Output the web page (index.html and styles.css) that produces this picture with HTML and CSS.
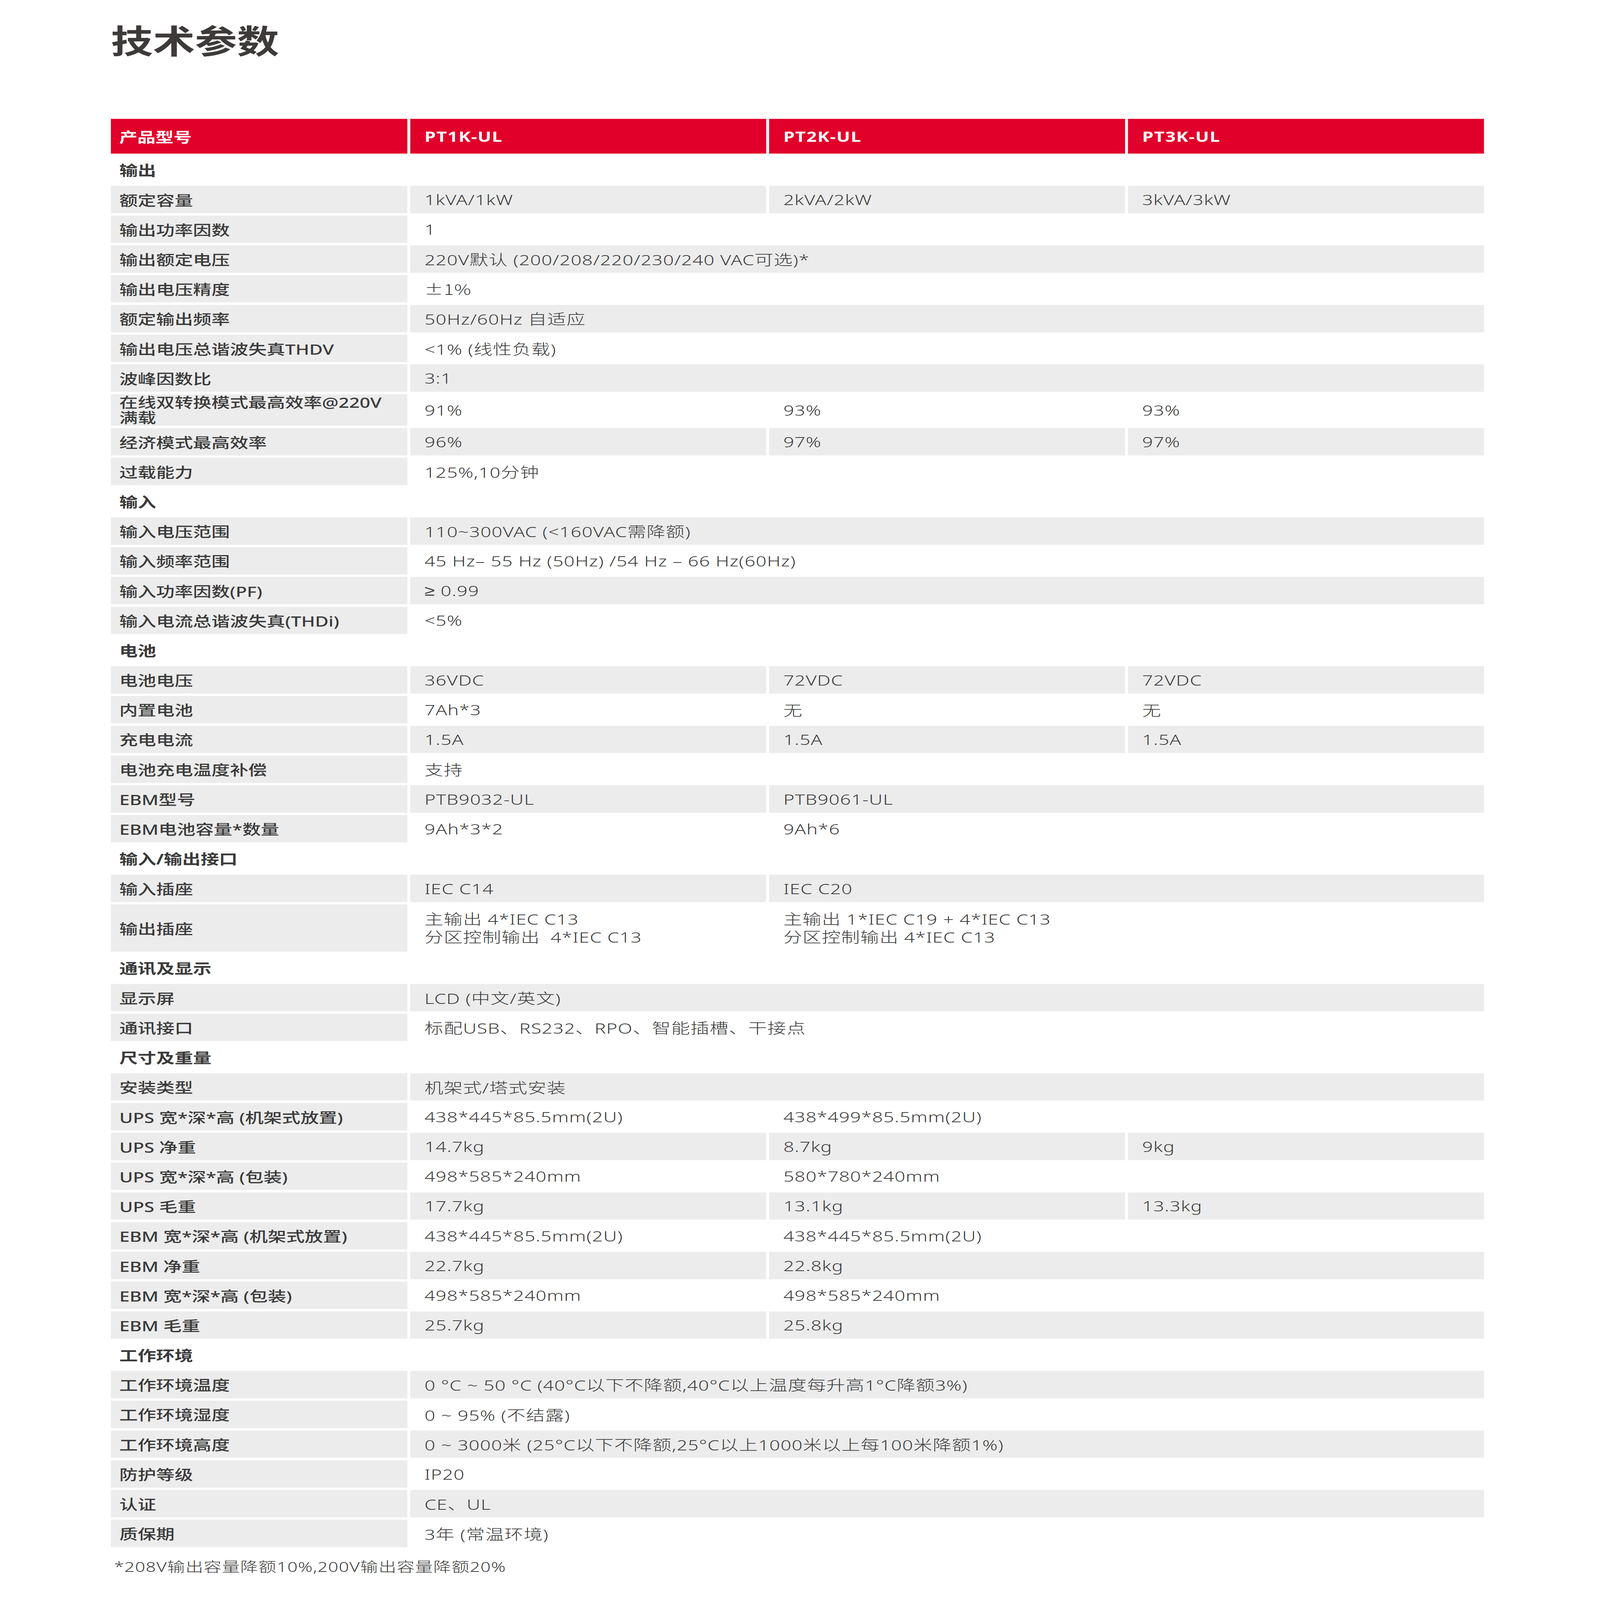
FILE: index.html
```html
<!DOCTYPE html>
<html lang="zh-CN">
<head>
<meta charset="utf-8">
<title>技术参数</title>
<link rel="stylesheet" href="styles.css">
</head>
<body>
<div class="frame">
<div class="page" id="page">
  <h1 class="title">技术参数</h1>

  <div class="spec">
    <div class="row head">
      <div class="cell lab">产品型号</div>
      <div class="cell">PT1K-UL</div>
      <div class="cell">PT2K-UL</div>
      <div class="cell">PT3K-UL</div>
    </div>

    <div class="row sec"><div class="cell lab">输出</div></div>
    <div class="row g"><div class="cell lab">额定容量</div><div class="cell">1kVA/1kW</div><div class="cell">2kVA/2kW</div><div class="cell">3kVA/3kW</div></div>
    <div class="row w"><div class="cell lab">输出功率因数</div><div class="cell s3">1</div></div>
    <div class="row g"><div class="cell lab">输出额定电压</div><div class="cell s3">220V默认 (200/208/220/230/240 VAC可选)*</div></div>
    <div class="row w"><div class="cell lab">输出电压精度</div><div class="cell s3 cjk">±1%</div></div>
    <div class="row g"><div class="cell lab">额定输出频率</div><div class="cell s3">50Hz/60Hz 自适应</div></div>
    <div class="row w"><div class="cell lab">输出电压总谐波失真THDV</div><div class="cell s3">&lt;1% (线性负载)</div></div>
    <div class="row g"><div class="cell lab">波峰因数比</div><div class="cell s3">3:1</div></div>
    <div class="row w tall"><div class="cell lab two"><span class="wrap">在线双转换模式最高效率@220V满载</span></div><div class="cell">91%</div><div class="cell">93%</div><div class="cell">93%</div></div>
    <div class="row g"><div class="cell lab">经济模式最高效率</div><div class="cell">96%</div><div class="cell">97%</div><div class="cell">97%</div></div>
    <div class="row w"><div class="cell lab">过载能力</div><div class="cell s3">125%,10分钟</div></div>

    <div class="row sec"><div class="cell lab">输入</div></div>
    <div class="row g"><div class="cell lab">输入电压范围</div><div class="cell s3">110~300VAC (&lt;160VAC需降额)</div></div>
    <div class="row w"><div class="cell lab">输入频率范围</div><div class="cell s3">45 Hz– 55 Hz (50Hz) /54 Hz – 66 Hz(60Hz)</div></div>
    <div class="row g"><div class="cell lab">输入功率因数(PF)</div><div class="cell s3"><span class="sym">≥</span>&nbsp;0.99</div></div>
    <div class="row w"><div class="cell lab">输入电流总谐波失真(THDi)</div><div class="cell s3">&lt;5%</div></div>

    <div class="row sec"><div class="cell lab">电池</div></div>
    <div class="row g"><div class="cell lab">电池电压</div><div class="cell">36VDC</div><div class="cell">72VDC</div><div class="cell">72VDC</div></div>
    <div class="row w"><div class="cell lab">内置电池</div><div class="cell">7Ah*3</div><div class="cell">无</div><div class="cell">无</div></div>
    <div class="row g"><div class="cell lab">充电电流</div><div class="cell">1.5A</div><div class="cell">1.5A</div><div class="cell">1.5A</div></div>
    <div class="row w"><div class="cell lab">电池充电温度补偿</div><div class="cell s3">支持</div></div>
    <div class="row g"><div class="cell lab">EBM型号</div><div class="cell">PTB9032-UL</div><div class="cell s2">PTB9061-UL</div></div>
    <div class="row w"><div class="cell lab">EBM电池容量*数量</div><div class="cell">9Ah*3*2</div><div class="cell s2">9Ah*6</div></div>

    <div class="row sec"><div class="cell lab">输入/输出接口</div></div>
    <div class="row g"><div class="cell lab">输入插座</div><div class="cell">IEC C14</div><div class="cell s2">IEC C20</div></div>
    <div class="row w taller"><div class="cell lab">输出插座</div><div class="cell lines"><span class="ln">主输出 4*IEC C13</span><span class="ln">分区控制输出&nbsp; 4*IEC C13</span></div><div class="cell s2 lines"><span class="ln">主输出 1*IEC C19 + 4*IEC C13</span><span class="ln">分区控制输出 4*IEC C13</span></div></div>

    <div class="row sec"><div class="cell lab">通讯及显示</div></div>
    <div class="row g"><div class="cell lab">显示屏</div><div class="cell s3">LCD (中文/英文)</div></div>
    <div class="row w"><div class="cell lab">通讯接口</div><div class="cell s3">标配USB、RS232、RPO、智能插槽、干接点</div></div>

    <div class="row sec"><div class="cell lab">尺寸及重量</div></div>
    <div class="row g"><div class="cell lab">安装类型</div><div class="cell s3">机架式/塔式安装</div></div>
    <div class="row w"><div class="cell lab">UPS 宽*深*高 (机架式放置)</div><div class="cell">438*445*85.5mm(2U)</div><div class="cell s2">438*499*85.5mm(2U)</div></div>
    <div class="row g"><div class="cell lab">UPS 净重</div><div class="cell">14.7kg</div><div class="cell">8.7kg</div><div class="cell">9kg</div></div>
    <div class="row w"><div class="cell lab">UPS 宽*深*高 (包装)</div><div class="cell">498*585*240mm</div><div class="cell s2">580*780*240mm</div></div>
    <div class="row g"><div class="cell lab">UPS 毛重</div><div class="cell">17.7kg</div><div class="cell">13.1kg</div><div class="cell">13.3kg</div></div>
    <div class="row w"><div class="cell lab">EBM 宽*深*高 (机架式放置)</div><div class="cell">438*445*85.5mm(2U)</div><div class="cell s2">438*445*85.5mm(2U)</div></div>
    <div class="row g"><div class="cell lab">EBM 净重</div><div class="cell">22.7kg</div><div class="cell s2">22.8kg</div></div>
    <div class="row w"><div class="cell lab">EBM 宽*深*高 (包装)</div><div class="cell">498*585*240mm</div><div class="cell s2">498*585*240mm</div></div>
    <div class="row g"><div class="cell lab">EBM 毛重</div><div class="cell">25.7kg</div><div class="cell s2">25.8kg</div></div>

    <div class="row sec"><div class="cell lab">工作环境</div></div>
    <div class="row g"><div class="cell lab">工作环境温度</div><div class="cell s3">0 °C ~ 50 °C (40°C以下不降额,40°C以上温度每升高1°C降额3%)</div></div>
    <div class="row w"><div class="cell lab">工作环境湿度</div><div class="cell s3">0 ~ 95% (不结露)</div></div>
    <div class="row g"><div class="cell lab">工作环境高度</div><div class="cell s3">0 ~ 3000米 (25°C以下不降额,25°C以上1000米以上每100米降额1%)</div></div>
    <div class="row w"><div class="cell lab">防护等级</div><div class="cell s3">IP20</div></div>
    <div class="row g"><div class="cell lab">认证</div><div class="cell s3">CE、UL</div></div>
    <div class="row w"><div class="cell lab">质保期</div><div class="cell s3">3年 (常温环境)</div></div>
  </div>

  <p class="note">*208V输出容量降额10%,200V输出容量降额20%</p>
</div>
</div>
<script src="fit.js"></script>
</body>
</html>
```

FILE: fit.js
```js
// The page is drawn on a 4949 x 6355 sheet; if the window is smaller,
// scale the sheet so that it fills the window exactly.
(function () {
  var page = document.getElementById('page');
  var sx = window.innerWidth / 4949;
  var sy = window.innerHeight / 6355;
  if (Math.abs(sx - 1) > 0.001 || Math.abs(sy - 1) > 0.001) {
    page.style.transform = 'scale(' + sx + ',' + sy + ')';
  }
})();
```

FILE: styles.css
```css
html, body {
  margin: 0;
  padding: 0;
  background: #ffffff;
  overflow: hidden;
}

.frame {
  width: 100vw;
  height: 100vh;
  overflow: hidden;
}

.page {
  width: 4949px;
  height: 6355px;
  box-sizing: border-box;
  padding: 78px 0 0 343px;
  transform-origin: 0 0;
  font-family: "Noto Sans", "Noto Sans CJK SC", sans-serif;
  color: #3c3c3c;
}

.title {
  margin: 0;
  font-family: "Noto Sans CJK SC", "Noto Sans", sans-serif;
  font-size: 130px;
  line-height: 156px;
  font-weight: 700;
  color: #3e3a3a;
}

.spec {
  margin-top: 238px;
  width: 4247px;
  display: flex;
  flex-direction: column;
  row-gap: 9.5px;
}

.row {
  display: grid;
  grid-template-columns: 917px repeat(3, 1fr);
  column-gap: 9px;
  height: 108.75px;
}

.row.tall { height: 125px; }
.row.taller { height: 188px; }

.cell {
  display: flex;
  align-items: center;
  padding-left: 44px;
  font-size: 58px;
  font-weight: 300;
  letter-spacing: 1.5px;
  white-space: nowrap;
}

.cell.lab {
  padding-left: 26px;
  font-size: 57px;
  font-weight: 500;
  letter-spacing: 0;
  background: #ececec;
  color: #3a3a3a;
}

.cell.two {
  white-space: normal;
  padding-right: 60px;
}

.cell.two .wrap {
  display: block;
  line-height: 60px;
}

.cell.lines {
  flex-direction: column;
  justify-content: center;
  align-items: flex-start;
}

.cell.lines .ln {
  display: block;
  line-height: 72px;
}

.cell.cjk {
  font-family: "Noto Sans CJK SC", sans-serif;
}

.sym {
  font-family: "Liberation Sans", sans-serif;
  font-weight: 400;
}

.s2 { grid-column: span 2; }
.s3 { grid-column: span 3; }

.row.g .cell { background: #ececec; }

.row.sec .cell.lab {
  background: transparent;
  font-weight: 700;
}

.row.head { height: 138px; }
.row.head .cell {
  background: #e1002a;
  color: #ffffff;
  font-weight: 700;
  font-size: 56px;
  letter-spacing: 2px;
}

.row.head .cell.lab {
  letter-spacing: 0;
}

.note {
  margin: 44px 0 0 10px;
  font-size: 55px;
  line-height: 66px;
  font-weight: 300;
  letter-spacing: 1.5px;
  color: #3c3c3c;
}
```
